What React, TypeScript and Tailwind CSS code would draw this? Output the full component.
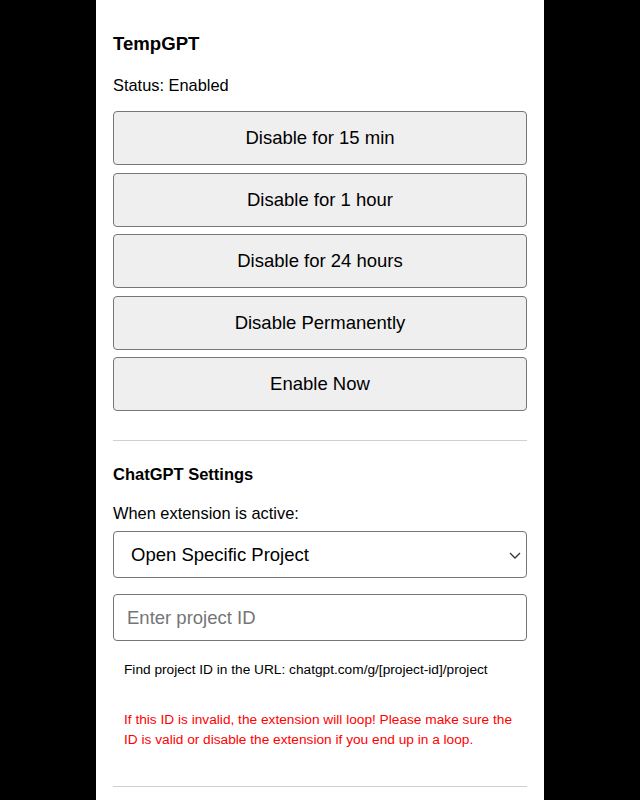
import React from 'react'

const durations = [
  'Disable for 15 min',
  'Disable for 1 hour',
  'Disable for 24 hours',
  'Disable Permanently',
  'Enable Now',
]

const App = () => {
  return (
    <div
      className="min-h-screen bg-black"
      style={{ fontFamily: '"Liberation Sans", Arial, sans-serif' }}
    >
      <div className="mx-auto min-h-screen w-[448px] bg-white px-[17px] pt-[33px] text-black">
        <h1 className="text-[18.6px] font-bold leading-[22px]">TempGPT</h1>
        <p className="mt-[20px] text-[16.4px] leading-[20px]">Status: Enabled</p>

        <div className="mt-[16px] flex flex-col gap-[7.5px]">
          {durations.map((label) => (
            <button
              key={label}
              className="h-[54px] w-full rounded-[4px] border border-[#767676] bg-[#efefef] text-[18.5px] text-black"
            >
              {label}
            </button>
          ))}
        </div>

        <hr className="mt-[29px] border-t border-[#d0d0d0]" />

        <h2 className="mt-[23px] text-[16.5px] font-bold leading-[20px]">
          ChatGPT Settings
        </h2>
        <p className="mt-[19px] text-[16.4px] leading-[20px]">
          When extension is active:
        </p>

        <div className="relative mt-[8px]">
          <select
            defaultValue="project"
            className="h-[47px] w-full appearance-none rounded-[4px] border border-[#767676] bg-white pl-[17px] text-[18.5px] text-black outline-none"
          >
            <option value="new">Open New Chat</option>
            <option value="project">Open Specific Project</option>
          </select>
          <svg
            className="pointer-events-none absolute right-[6px] top-[21px]"
            width="12"
            height="7"
            viewBox="0 0 12 7"
            fill="none"
          >
            <path d="M1 1l5 5 5-5" stroke="#333" strokeWidth="1.3" />
          </svg>
        </div>

        <input
          type="text"
          placeholder="Enter project ID"
          className="mt-[16px] h-[47px] w-full rounded-[4px] border border-[#767676] bg-white pl-[13px] text-[18.5px] text-black outline-none placeholder:text-[#757575]"
        />

        <div className="px-[11px]">
          <p className="mt-[20px] text-[13.7px] leading-[18px]">
            Find project ID in the URL: chatgpt.com/g/[project-id]/project
          </p>
          <p className="mt-[31px] text-[13.7px] leading-[20px] text-[#ff0000]">
            If this ID is invalid, the extension will loop! Please make sure the
            ID is valid or disable the extension if you end up in a loop.
          </p>
        </div>

        <hr className="mt-[36px] border-t border-[#d0d0d0]" />
      </div>
    </div>
  )
}

export default App
